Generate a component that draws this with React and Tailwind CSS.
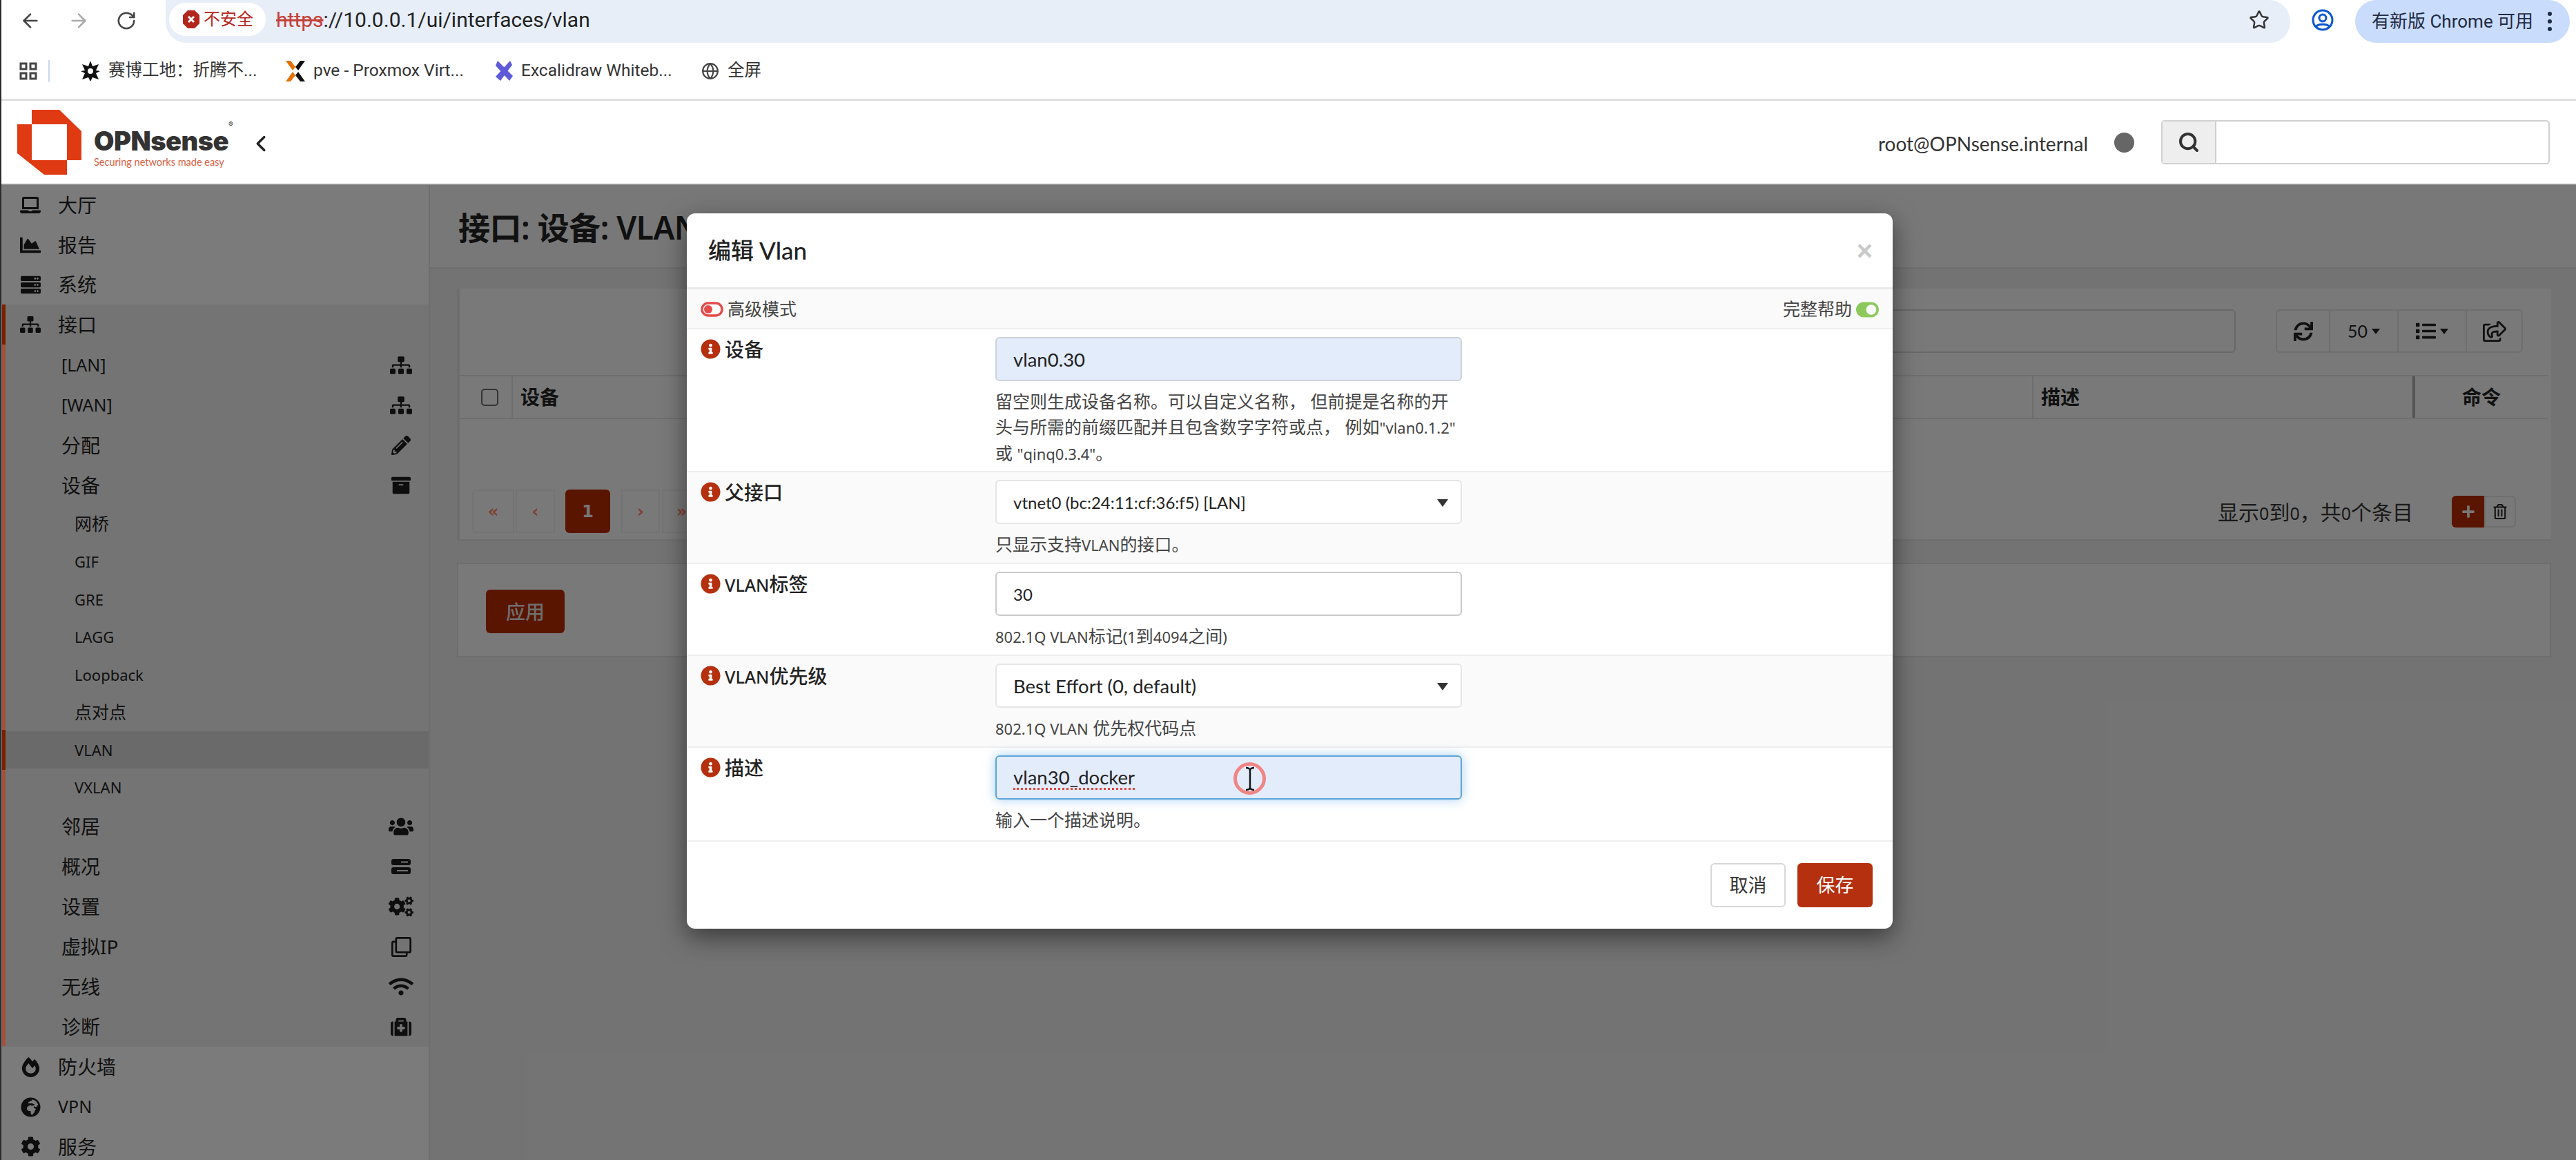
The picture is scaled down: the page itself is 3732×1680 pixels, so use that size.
import React from "react";
import { ArrowLeft, ArrowRight, RotateCw, Star, Globe, ChevronLeft, Search } from "lucide-react";
import {
  FaLaptop, FaChartArea, FaServer, FaSitemap, FaPencilAlt, FaArchive, FaUsers, FaCogs, FaRegClone,
  FaWifi, FaMedkit, FaFireAlt, FaGlobeAfrica, FaCog, FaSync, FaList, FaRegShareSquare,
  FaRegTrashAlt, FaPlus, FaInfoCircle, FaToggleOn,
} from "react-icons/fa";

const Hdd = () => (
  <svg width="30" height="24" viewBox="0 0 30 24" fill="#1c1c1c">
    <path d="M4 1h22a3 3 0 0 1 3 3v3a3 3 0 0 1-3 3H4a3 3 0 0 1-3-3V4a3 3 0 0 1 3-3zm11 3.5v2h10v-2zM4 13h22a3 3 0 0 1 3 3v4a3 3 0 0 1-3 3H4a3 3 0 0 1-3-3v-4a3 3 0 0 1 3-3zm5 4v2h16v-2z" fillRule="evenodd" />
  </svg>
);

const L = ({ children, s = "text-[22px]" }) => <span className={s}>{children}</span>;

const MainRow = ({ icon, label, latin }) => (
  <div className="h-[57.8px] flex items-center pl-[26px]">
    <span className="w-[30px] flex justify-center text-[#1c1c1c]">{icon}</span>
    <span className={latin ? "ml-[25px] text-[25px] text-[#222]" : "ml-[25px] text-[28px] text-[#222]"}>{label}</span>
  </div>
);

const SubRow = ({ label, latin, icon }) => (
  <div className="h-[58.1px] flex items-center pl-[81px] pr-[22px] justify-between">
    <span className={latin ? "text-[25px] text-[#222]" : "text-[28px] text-[#222]"}>{label}</span>
    <span className="w-[36px] flex justify-center text-[#1c1c1c]">{icon}</span>
  </div>
);

const Sub2Row = ({ label, latin, active }) => (
  <div className={active ? "h-[54.5px] flex items-center pl-[100px] bg-[#d4d4d4]" : "h-[54.5px] flex items-center pl-[100px]"}>
    <span className={latin ? "text-[22px] text-[#222]" : "text-[25px] text-[#222]"}>{label}</span>
  </div>
);

const Sidebar = () => (
  <div className="w-[623px] shrink-0 bg-[#f6f6f6] border-r-2 border-[#dcdcdc] pl-[3px] overflow-hidden">
    <div>
      <MainRow icon={<FaLaptop size={36} />} label="大厅" />
      <MainRow icon={<FaChartArea size={30} />} label="报告" />
      <MainRow icon={<FaServer size={29} />} label="系统" />
    </div>
    <div className="bg-[#e9e9e9] pl-[5px]">
      <div className="h-[58.1px] flex items-center pl-[21px]">
        <span className="w-[30px] flex justify-center text-[#1c1c1c]"><FaSitemap size={32} /></span>
        <span className="ml-[25px] text-[28px] text-[#222]">接口</span>
      </div>
      <SubRow label="[LAN]" latin icon={<FaSitemap size={32} />} />
      <SubRow label="[WAN]" latin icon={<FaSitemap size={32} />} />
      <SubRow label="分配" icon={<FaPencilAlt size={28} />} />
      <SubRow label="设备" icon={<FaArchive size={28} />} />
      <Sub2Row label="网桥" />
      <Sub2Row label="GIF" latin />
      <Sub2Row label="GRE" latin />
      <Sub2Row label="LAGG" latin />
      <Sub2Row label="Loopback" latin />
      <Sub2Row label="点对点" />
      <Sub2Row label="VLAN" latin active />
      <Sub2Row label="VXLAN" latin />
      <SubRow label="邻居" icon={<FaUsers size={36} />} />
      <SubRow label="概况" icon={<Hdd />} />
      <SubRow label="设置" icon={<FaCogs size={36} />} />
      <SubRow label="虚拟IP" icon={<FaRegClone size={29} />} />
      <SubRow label="无线" icon={<FaWifi size={36} />} />
      <SubRow label="诊断" icon={<FaMedkit size={30} />} />
    </div>
    <MainRow icon={<FaFireAlt size={29} />} label="防火墙" />
    <MainRow icon={<FaGlobeAfrica size={29} />} label="VPN" latin />
    <MainRow icon={<FaCog size={29} />} label="服务" />
  </div>
);

const Content = () => (
  <div className="flex-1 min-w-0 bg-[#e7e7e7] flex flex-col">
    <div className="h-[121px] bg-[#f0f0f0] border-b-2 border-[#dcdcdc] pl-[41px] pt-[2px] flex items-center">
      <h1 className="text-[46px] font-semibold text-[#222] leading-none tracking-[-0.5px]">接口: 设备: VLAN</h1>
    </div>
    <div className="ml-[39px] mr-[36px] mt-[29px] flex flex-col gap-[32px]">
      <div className="h-[365px] bg-[#f3f3f3] border-l-[4px] border-[#dcdcdc] border-b-2 flex flex-col">
        <div className="h-[125px] shrink-0 flex items-start justify-end pt-[30px] pr-[41px] gap-[58px]">
          <div className="w-[1400px] h-[63px] border-2 border-[#d0d0d0] rounded-[6px] bg-[#f3f3f3]" />
          <div className="w-[358px] h-[63px] border-2 border-[#dcdcdc] rounded-[6px] flex items-stretch text-[#222]">
            <div className="w-[77px] flex items-center justify-center border-r-2 border-[#dcdcdc]"><FaSync size={28} /></div>
            <div className="w-[99px] flex items-center justify-center border-r-2 border-[#dcdcdc] gap-[6px] text-[25px] [font-family:Lato,sans-serif]">50
              <svg width="12" height="8" viewBox="0 0 12 8"><path d="M0 0h12L6 8z" fill="#222" /></svg>
            </div>
            <div className="w-[99px] flex items-center justify-center border-r-2 border-[#dcdcdc] gap-[6px]"><FaList size={29} />
              <svg width="12" height="8" viewBox="0 0 12 8"><path d="M0 0h12L6 8z" fill="#222" /></svg>
            </div>
            <div className="flex-1 flex items-center justify-center"><FaRegShareSquare size={34} /></div>
          </div>
        </div>
        <div className="h-[64px] shrink-0 flex border-y-2 border-[#dcdcdc] text-[28px] font-semibold text-[#222] mr-[5px]">
          <div className="w-[77px] shrink-0 flex items-center justify-center pl-[12px] border-r-2 border-[#dcdcdc]">
            <span className="w-[25px] h-[25px] border-2 border-[#666] rounded-[5px]" />
          </div>
          <div className="flex-1 flex items-center pl-[11px] border-r-2 border-[#dcdcdc]">设备</div>
          <div className="w-[553px] shrink-0 flex items-center pl-[11px] border-r-4 border-[#aaa]">描述</div>
          <div className="w-[192px] shrink-0 flex items-center justify-center">命令</div>
        </div>
        <div className="flex-1 flex items-start justify-between pt-[102px] pl-[18px] pr-[51px]">
          <div className="flex items-stretch h-[63px] text-[#ff7f5c] text-[24px] font-bold [font-family:'DejaVu_Sans',sans-serif]">
            <div className="w-[61px] flex items-center justify-center border-2 border-[#e8e8e8] rounded-l-[6px]">«</div>
            <div className="w-[57px] ml-[2px] flex items-center justify-center border-2 border-[#e8e8e8]">‹</div>
            <div className="w-[65px] ml-[15px] flex items-center justify-center bg-[#b52a00] text-[#eee] rounded-[6px]">1</div>
            <div className="w-[56px] ml-[16px] flex items-center justify-center border-2 border-[#e8e8e8]">›</div>
            <div className="w-[57px] ml-[3px] flex items-center justify-center border-2 border-[#e8e8e8]">»</div>
          </div>
          <div className="flex items-center gap-[56px] mt-[9px]">
            <span className="text-[30px] text-[#333]">显示<L s="text-[25px]">0</L>到<L s="text-[25px]">0</L>，共<L s="text-[25px]">0</L>个条目</span>
            <div className="flex h-[46px]">
              <div className="w-[47px] bg-[#b52a00] rounded-l-[6px] flex items-center justify-center text-[#eee]"><FaPlus size={20} /></div>
              <div className="w-[46px] border-2 border-[#dcdcdc] rounded-r-[6px] flex items-center justify-center text-[#222]"><FaRegTrashAlt size={22} /></div>
            </div>
          </div>
        </div>
      </div>
      <div className="h-[137px] bg-[#f3f3f3] border-2 border-[#dcdcdc] pl-[40px] pt-[37px]">
        <div className="w-[114px] h-[63px] bg-[#b52a00] rounded-[6px] text-[#ddd] text-[28px] font-medium flex items-center justify-center">应用</div>
      </div>
    </div>
  </div>
);

const Info = () => <FaInfoCircle size={29} className="text-[#b5300f] shrink-0" />;

const Caret = () => (
  <svg width="16" height="11" viewBox="0 0 16 11" className="shrink-0"><path d="M0 0h16L8 11z" fill="#333" /></svg>
);

const Row = ({ label, h, alt, children, help }) => (
  <div className={alt ? "flex bg-[#fafafa] border-b-2 border-[#eeeeee] shrink-0 " + h : "flex bg-white border-b-2 border-[#eeeeee] shrink-0 " + h}>
    <div className="w-[447px] shrink-0 pl-[20px] pt-[14px] flex items-start gap-[6px]">
      <Info />
      <span className="text-[28px] font-medium text-[#222] leading-[30px]">{label}</span>
    </div>
    <div className="w-[678px] pt-[11px]">
      {children}
      <div className="mt-[11px] text-[25px] leading-[37px] text-[#444]">{help}</div>
    </div>
  </div>
);

const inputCls = "h-[64px] w-[676px] rounded-[6px] flex items-center px-[24px] pt-[2px] [font-family:Lato,sans-serif] text-[#222] ";

const Modal = () => (
  <div className="absolute left-[995px] top-[309px] w-[1747px] h-[1036px] bg-white rounded-[12px] shadow-[0_12px_36px_rgba(0,0,0,0.5)] flex flex-col overflow-hidden">
    <div className="h-[110px] shrink-0 border-b-[3px] border-[#e9e9e9] flex items-center justify-between pl-[31px] pr-[29px]">
      <h4 className="text-[33px] font-medium text-[#222] flex items-center gap-[8px]">编辑 <L s="text-[35px] [font-family:Lato,sans-serif]">Vlan</L></h4>
      <span className="text-[40px] font-bold text-[#c9c9c9] leading-none [font-family:'Liberation_Sans',sans-serif]">×</span>
    </div>
    <div className="h-[58px] shrink-0 bg-[#fafafa] border-b-2 border-[#eeeeee] flex items-center justify-between pl-[20px] pr-[20px] pt-[2px]">
      <span className="flex items-center gap-[6px] text-[25px] text-[#444]">
        <svg width="33" height="22" viewBox="0 0 33 22" className="shrink-0"><rect x="2" y="2" width="29" height="18" rx="9" fill="#fff" stroke="#e54b4b" strokeWidth="3.5" /><circle cx="11" cy="11" r="6" fill="#e54b4b" /></svg>
        高级模式
      </span>
      <span className="flex items-center gap-[6px] text-[25px] text-[#444]">完整帮助<FaToggleOn size={33} className="text-[#8cc85c]" /></span>
    </div>
    <Row label="设备" h="h-[207px]" help={<>
      留空则生成设备名称。可以自定义名称， 但前提是名称的开<br />头与所需的前缀匹配并且包含数字字符或点， 例如<L>"vlan0.1.2"</L><br />或 <L>"qinq0.3.4"</L>。
    </>}>
      <div className={inputCls + "text-[27.5px] bg-[#e3ecfb] border-2 border-[#cfd3d9]"}>vlan0.30</div>
    </Row>
    <Row label="父接口" alt h="h-[133px]" help={<>只显示支持<L>VLAN</L>的接口。</>}>
      <div className={inputCls + "text-[24px] bg-white border-2 border-[#e5e5e5] justify-between pr-[18px]"}>vtnet0 (bc:24:11:cf:36:f5) [LAN]<Caret /></div>
    </Row>
    <Row label={<><L s="text-[25px]">VLAN</L>标签</>} h="h-[133px]" help={<><L>802.1Q VLAN</L>标记<L>(1</L>到<L>4094</L>之间<L>)</L></>}>
      <div className={inputCls + "text-[24px] bg-white border-2 border-[#c9c9c9]"}>30</div>
    </Row>
    <Row label={<><L s="text-[25px]">VLAN</L>优先级</>} alt h="h-[133px]" help={<><L>802.1Q VLAN</L> 优先权代码点</>}>
      <div className={inputCls + "text-[27.5px] bg-white border-2 border-[#e5e5e5] justify-between pr-[18px]"}>Best Effort (0, default)<Caret /></div>
    </Row>
    <Row label="描述" h="h-[136px]" help="输入一个描述说明。">
      <div className={inputCls + "text-[27.5px] bg-[#e3ecfb] border-2 border-[#5ea5d8] shadow-[0_0_16px_rgba(102,175,233,0.6)]"}>
        <span className="border-b-[3px] border-dotted border-[#e0433f] leading-[30px]">vlan30_docker</span>
      </div>
    </Row>
    <div className="flex-1 flex justify-end items-start pt-[31px] pr-[29px] gap-[17px]">
      <div className="w-[109px] h-[64px] border-2 border-[#d8d8d8] rounded-[6px] flex items-center justify-center text-[27px] text-[#333]">取消</div>
      <div className="w-[109px] h-[64px] bg-[#b5300f] rounded-[6px] flex items-center justify-center text-[27px] text-white">保存</div>
    </div>
    <div className="absolute left-[792px] top-[795px] w-[47px] h-[47px] rounded-full border-[5px] border-[#f08585] flex items-center justify-center">
      <svg width="14" height="36" viewBox="0 0 14 36" fill="none" stroke="#111" strokeWidth="2.4"><path d="M1 2c3 0 6 1 6 4v24c0 3-3 4-6 4M13 2c-3 0-6 1-6 4v24c0 3 3 4 6 4" /></svg>
    </div>
  </div>
);

const BookmarkItem = ({ icon, label, w }) => (
  <div className={"flex items-center gap-[12px] " + w}>
    {icon}
    <span className="text-[24.5px] text-[#333] whitespace-nowrap [font-family:Roboto,'Noto_Sans_CJK_SC',sans-serif]">{label}</span>
  </div>
);

export default function App() {
  return (
    <div className="relative w-[3732px] h-[1680px] overflow-hidden bg-white flex flex-col [font-family:'Noto_Sans','Noto_Sans_CJK_SC',sans-serif]">
      {/* browser toolbar */}
      <div className="h-[62px] shrink-0 flex items-start [font-family:Roboto,'Noto_Sans_CJK_SC',sans-serif]">
        <div className="w-[240px] h-[59px] flex items-center pl-[28px] gap-[38px] shrink-0">
          <ArrowLeft size={32} className="text-[#444]" />
          <ArrowRight size={32} className="text-[#aaa]" />
          <RotateCw size={30} className="text-[#444]" />
        </div>
        <div className="w-[3078px] h-[62px] bg-[#e7eef8] rounded-b-[30px] rounded-r-[31px] flex items-center pl-[5px] pr-[30px] justify-between">
          <div className="flex items-center">
            <div className="h-[48px] w-[140px] bg-white rounded-full flex items-center pl-[20px] gap-[6px] -mt-[6px]">
              <svg width="24" height="26" viewBox="0 0 24 26"><path d="M7 0h10l7 7v12l-7 7H7l-7-7V7z" fill="#b3261e" /><path d="M8 9l8 8M16 9l-8 8" stroke="#fff" strokeWidth="3" /></svg>
              <span className="text-[24px] text-[#b3261e] whitespace-nowrap">不安全</span>
            </div>
            <span className="ml-[15px] text-[30px] -mt-[5px] text-[#222] whitespace-nowrap"><span className="text-[#c5423a] line-through">https</span>://10.0.0.1/ui/interfaces/vlan</span>
          </div>
          <Star size={30} className="text-[#333] -mt-[5px]" />
        </div>
        <div className="w-[94px] h-[58px] flex items-center justify-center shrink-0">
          <svg width="32" height="32" viewBox="0 0 32 32" fill="none" stroke="#0b57d0" strokeWidth="3"><circle cx="16" cy="16" r="14" /><circle cx="16" cy="13" r="5" /><path d="M6 26c3-5 17-5 20 0" /></svg>
        </div>
        <div className="w-[311px] h-[62px] bg-[#c9dcfb] rounded-[31px] flex items-center pl-[24px] justify-between pr-[26px] shrink-0">
          <span className="text-[26px] text-[#1f2a44] whitespace-nowrap">有新版 Chrome 可用</span>
          <span className="flex flex-col gap-[5px]">
            <span className="w-[6px] h-[6px] rounded-full bg-[#1f2a44]" />
            <span className="w-[6px] h-[6px] rounded-full bg-[#1f2a44]" />
            <span className="w-[6px] h-[6px] rounded-full bg-[#1f2a44]" />
          </span>
        </div>
      </div>
      {/* bookmarks */}
      <div className="h-[84px] shrink-0 border-b-[3px] border-[#e0e0e0] flex items-center pl-[28px]">
        <svg width="26" height="26" viewBox="0 0 26 26" fill="none" stroke="#444" strokeWidth="3" className="shrink-0"><rect x="2" y="2" width="8" height="8" /><rect x="16" y="2" width="8" height="8" /><rect x="2" y="16" width="8" height="8" /><rect x="16" y="16" width="8" height="8" /></svg>
        <div className="w-[2px] h-[32px] bg-[#c9d8ef] ml-[16px] mr-[45px]" />
        <BookmarkItem w="w-[297px]" label="赛博工地：折腾不..." icon={
          <svg width="28" height="30" viewBox="0 0 28 30" className="shrink-0"><path d="M14 0l3 8 9-3-4 9 6 1-6 3 4 9-9-3-3 6-3-6-9 3 4-9-6-3 6-1-4-9 9 3z" fill="#111" /><circle cx="14" cy="15" r="4" fill="#fff" /></svg>
        } />
        <BookmarkItem w="w-[303px]" label="pve - Proxmox Virt..." icon={
          <svg width="28" height="30" viewBox="0 0 28 30" className="shrink-0"><path d="M0 0h7l7 9-4 5L0 0zM0 30h7l7-9-4-5L0 30z" fill="#e57000" /><path d="M28 0h-7l-7 9 4 5 10-14zM28 30h-7l-7-9 4-5 10 14z" fill="#111" /></svg>
        } />
        <BookmarkItem w="w-[299px]" label="Excalidraw Whiteb..." icon={
          <svg width="26" height="30" viewBox="0 0 26 30" className="shrink-0"><path d="M4 0l22 22-5 7L1 7zM22 0l3 6-17 23-7-6z" fill="#5e5ad8" /></svg>
        } />
        <BookmarkItem w="w-[100px]" label="全屏" icon={<Globe size={26} className="text-[#444] shrink-0" />} />
      </div>
      {/* OPNsense header */}
      <div className="h-[122px] shrink-0 border-b-[2px] border-[#999] flex items-center pl-[24px] pr-[38px] justify-between">
        <div className="flex items-center">
          <svg width="94" height="94" viewBox="0 0 94 94" className="shrink-0">
            <path fillRule="evenodd" d="M22 0h40l32 31v42H73v21H40L1 63V21h21zM22 21v52h51V21z" fill="#e03a13" />
          </svg>
          <div className="ml-[18px] flex flex-col w-[205px] mt-[18px]">
            <span className="text-[38px] leading-[38px] font-black text-[#333] tracking-[-0.5px] [font-family:Inter,sans-serif]">OPNsense<sup className="text-[10px] font-normal align-top">®</sup></span>
            <span className="text-[14.5px] leading-[20px] mt-[2px] text-[#d9603f] whitespace-nowrap [font-family:Lato,sans-serif]">Securing networks made easy</span>
          </div>
          <ChevronLeft size={38} strokeWidth={2.2} className="text-[#222] ml-[18px] mt-[4px]" />
        </div>
        <div className="flex items-center">
          <span className="text-[28px] text-[#333] mt-[3px] [font-family:Lato,sans-serif]">root@OPNsense.internal</span>
          <span className="w-[29px] h-[29px] rounded-full bg-[#666] ml-[38px]" />
          <div className="ml-[39px] w-[563px] h-[64px] border-2 border-[#d0d0d0] rounded-[5px] flex">
            <div className="w-[78px] bg-[#eeeeee] border-r-2 border-[#cfcfcf] flex items-center justify-center text-[#333]"><Search size={32} strokeWidth={3} /></div>
          </div>
        </div>
      </div>
      {/* page */}
      <div className="flex-1 min-h-0 flex">
        <Sidebar />
        <Content />
      </div>
      {/* backdrop */}
      <div className="absolute left-0 right-0 top-[268px] bottom-0 bg-black/50" />
      {/* left accent of the open menu */}
      <div className="absolute left-[3px] top-[441px] w-[5px] h-[1074px] bg-[#a5503c]" />
      <div className="absolute left-[3px] top-[441px] w-[5px] h-[58px] bg-[#7a2000]" />
      <div className="absolute left-[3px] top-[1057px] w-[5px] h-[58px] bg-[#7a2000]" />
      <Modal />
      <div className="absolute left-0 top-0 bottom-0 w-[2px] bg-[#2c2c2c]" />
    </div>
  );
}
